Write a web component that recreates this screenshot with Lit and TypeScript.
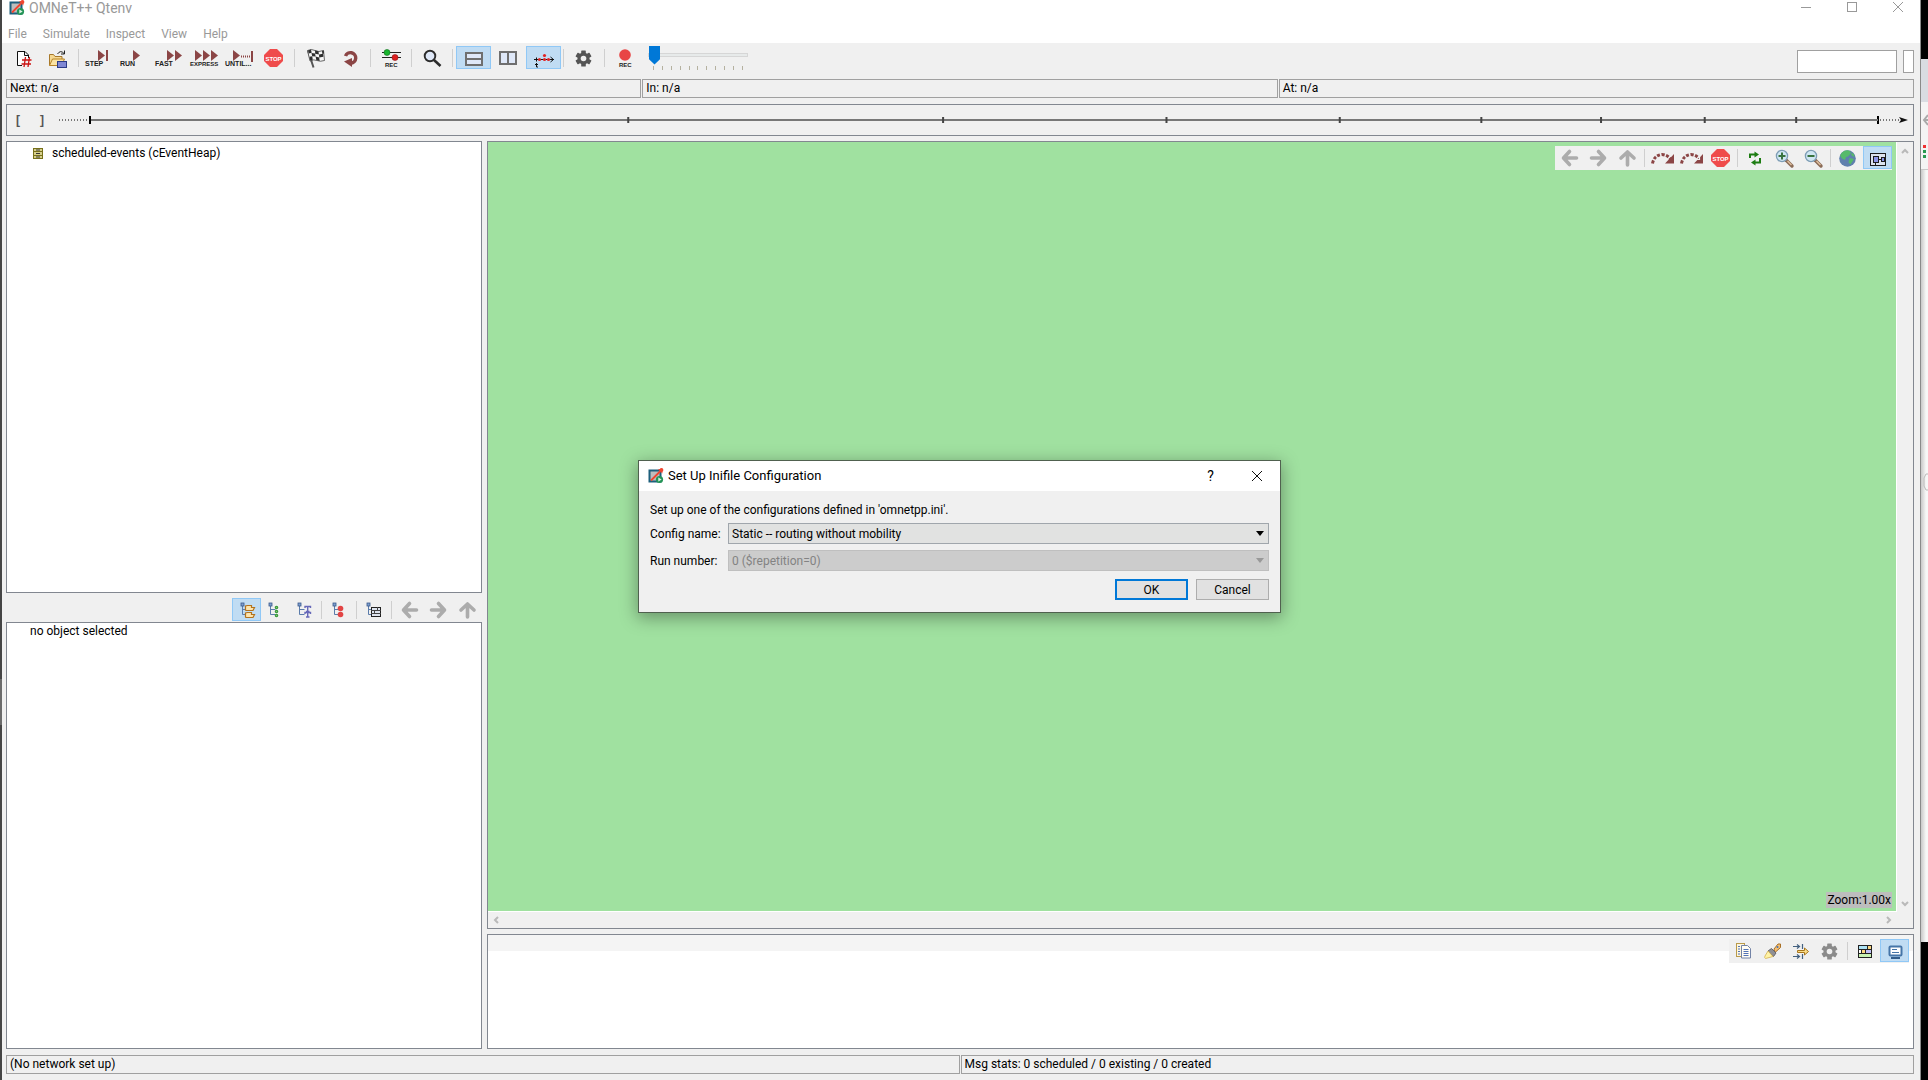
import { LitElement, html, svg, css, nothing } from "lit";
import type { SVGTemplateResult } from "lit";
import { customElement, property } from "lit/decorators.js";
import { classMap } from "lit/directives/class-map.js";

const MAROON = "#8b4545";

const triangle = (x: number, y = 4) => svg`<path d="M${x} ${y}l7 5.5l-7 5.5z" fill="${MAROON}"/>`;
const label = (x: number, text: string, size = 7) =>
  svg`<text x="${x}" y="20" font-size="${size}" font-weight="bold" fill="#222">${text}</text>`;
const stopSign = (x: number, y: number) => svg`
  <path d="M${x + 6} ${y}h7l6 6v6l-6 6h-7l-6-6v-6z" fill="#ef4b4b"/>
  <text x="${x + 9.5}" y="${y + 11.5}" font-size="6" font-weight="bold" fill="#fff" text-anchor="middle">STOP</text>`;
const gear = (cx: number, cy: number, fill: string) => svg`
  <g transform="translate(${cx} ${cy})" fill="${fill}">
    ${[0, 60, 120].map((a) => svg`<rect x="-2.3" y="-8" width="4.6" height="16" rx=".6" transform="rotate(${a})"/>`)}
    <circle r="6"/><circle r="2.8" fill="#efefef"/>
  </g>`;
const arrow = (angle: number) => svg`
  <path transform="translate(14.5 12) rotate(${angle})" d="M7 0H-5M0-6.500L-6 0L0 6.500" fill="none"
    stroke="#acacac" stroke-width="3.600" stroke-linecap="round" stroke-linejoin="round"/>`;
const treeStem = (x: number) => svg`
  <path d="M${x + 1.5} 7v9.500h5M${x + 1.5} 11.500h5" fill="none" stroke="#5b7cab"/>
  <rect x="${x}" y="5" width="3" height="3" fill="#7fa0cf" stroke="#39588c" stroke-width=".8"/>`;
const hop = (fast: boolean) => svg`
  <path d="M4.500 17.500Q6 9.500 14 8.500Q20 9 23 14" fill="none" stroke="${MAROON}" stroke-width="3" stroke-dasharray="3 1.500"/>
  <path d="M26 8v9.500h-9z" fill="${MAROON}"/>
  ${fast ? svg`<path d="M22.500 8v6M18.500 13.500h4" stroke="#efefef" stroke-width="1.200"/>` : nothing}`;
const lens = (plus: boolean) => svg`
  <path d="M16 14l6 6" stroke="#8a6a55" stroke-width="3.400" stroke-linecap="round"/>
  <path d="M17.500 15l4 4" stroke="#e3c3a2" stroke-width="1.200"/>
  <circle cx="12" cy="10" r="5.600" fill="#cfe6f3" stroke="#7d9db5" stroke-width="1.300"/>
  <path d="${plus ? "M8.500 10h7M12 6.500v7" : "M8.500 10h7"}" stroke="#39733f" stroke-width="2"/>`;

const ICONS: Record<string, SVGTemplateResult> = {
  app: svg`
    <rect x="1.500" y="2.500" width="11" height="11" fill="#bdbdbd" stroke="#1d5f7c" stroke-width="2"/>
    <path d="M3 12.500L12 3.500" stroke="#f0452f" stroke-width="1.800"/>
    <path d="M10 1.500L14 .5L14.500 5.500Z" fill="#f0452f"/><circle cx="13.500" cy="2" r="1.900" fill="#f0452f"/>
    <circle cx="11.500" cy="11.500" r="3.600" fill="#249457"/><path d="M10.300 9.500l3.400 2l-3.400 2z" fill="#dff3e6"/>`,
  newNet: svg`
    <path d="M12 6h7v3.500h3v3h-6v6.500h-4z" fill="#fff"/>
    <path d="M16 19.500h-4.500v-14h7.500l3.500 3.500v3M18.500 5.500v4h4" fill="none" stroke="#111"/>
    <path d="M19.500 11l-1.500 10M23.500 11l-1.500 10M16 14h9.500M15.500 18h9.500" stroke="#cc1414" stroke-width="1.300"/>`,
  open: svg`
    <path d="M8.500 19.500v-11h4l1.500 2h7v3" fill="#f6d992" stroke="#a8792b"/>
    <path d="M8.500 19.500l3-6.500h12l-3 6.500z" fill="#fbe3a2" stroke="#b98427"/>
    <path d="M16.500 8q3-4.500 6.500-.5M23.500 4.500v3.500h-3.500" fill="none" stroke="#222"/>
    <rect x="16.500" y="15.500" width="9" height="6" fill="#8087d3" stroke="#2c3a86"/>`,
  step: svg`${triangle(16)}<path d="M25 4v11" stroke="${MAROON}" stroke-width="2"/>${label(3, "STEP")}`,
  run: svg`${triangle(16)}${label(3, "RUN")}`,
  fast: svg`${triangle(15)}${triangle(23)}${label(3, "FAST")}`,
  express: svg`${triangle(8)}${triangle(16)}${triangle(24)}${label(3, "EXPRESS", 6)}`,
  until: svg`${triangle(11)}<path d="M19 10.500h9" stroke="${MAROON}" stroke-dasharray="1 1" stroke-width="2"/>
    <path d="M30 5v11" stroke="${MAROON}" stroke-width="2"/>${label(3, "UNTIL...")}`,
  stop: stopSign(7, 3),
  flag: svg`
    <path d="M10 4.500L15.500 21.500" stroke="#555" stroke-width="2"/>
    <path d="M9.500 4.500q4-2 7.500 0t8.500 0l1 10q-4.500 1.500-7.500 0t-7 .5z" fill="#f5f5f5" stroke="#444" stroke-width=".8"/>
    <g fill="#2e2e2e"><path d="M10 4.500l3-1l.7 3.300l-3 .8zM17 4.500l3.500.8l.4 3.200l-3.700-.8zM13.500 7l3.600.5l.5 3l-3.400-.2zM21 8.400l4-.6l.4 3l-4.200.6z
      M11.500 10.800l2.700-.5l.6 3.500l-2.600.8zM17.600 10.500l3.600.9l.4 3.500l-3.300-.8zM24 4.900l1.700-.4l.3 3l-1.700.3z"/></g>`,
  rebuild: svg`
    <path d="M12.500 10a5.300 5.300 0 1 1 5.500 7.200" fill="none" stroke="${MAROON}" stroke-width="3.400"/>
    <path d="M11 15.500l8-3.500v9z" fill="${MAROON}"/>`,
  record: svg`
    <path d="M8 6.500h19M8 11.500h19" stroke="#222"/>
    <circle cx="13" cy="6.500" r="3" fill="#19b52f" stroke="#0c6b1a" stroke-width=".6"/>
    <circle cx="21" cy="11.500" r="3" fill="#dd2020" stroke="#8c1010" stroke-width=".6"/>
    <text x="11" y="21" font-size="6" font-weight="bold" fill="#222">REC</text>`,
  find: svg`
    <circle cx="15" cy="10" r="5.300" fill="#dfe8f8" stroke="#2c2c2c" stroke-width="1.900"/>
    <path d="M19 14l6.500 6" stroke="#2c2c2c" stroke-width="2.600"/>`,
  splitH: svg`<g fill="#dfe8f8" stroke="#6f6f6f" stroke-width="2"><rect x="10" y="7" width="16" height="12"/><path d="M10 13h16"/></g>`,
  splitV: svg`<g fill="#dfe8f8" stroke="#6f6f6f" stroke-width="2"><rect x="9" y="6" width="16" height="12"/><path d="M17 6v12"/></g>`,
  timeline: svg`
    <path d="M8 13.500h20M10.500 11.500v4M24.500 11l3 2.500l-3 2.500" stroke="#111" fill="none"/>
    <g fill="#e02323"><circle cx="13.500" cy="13.500" r="1.600"/><circle cx="18.500" cy="13.500" r="1.600"/><circle cx="22.500" cy="13.500" r="1.600"/><circle cx="18.500" cy="9.500" r="1.600"/></g>
    <path d="M10.500 17v4h1.500M9 18.500h3" stroke="#111" fill="none"/>`,
  prefs: gear(16.5, 12.5, "#555"),
  recVideo: svg`<circle cx="17" cy="9" r="5.800" fill="#e84545"/>
    <text x="11" y="21" font-size="6" font-weight="bold" fill="#222">REC</text>`,

  back: arrow(0),
  forward: arrow(180),
  up: arrow(90),
  runUntil: hop(false),
  fastUntil: hop(true),
  stopSmall: stopSign(5, 3),
  refresh: svg`
    <path d="M9 12v-3.500h5M19 12v4.500h-5" fill="none" stroke="#1d7d12" stroke-width="2"/>
    <path d="M13.500 5.500l4.500 3l-4.500 3zM14.500 13.500l-4.500 3l4.500 3z" fill="#1d7d12"/>`,
  zoomIn: lens(true),
  zoomOut: lens(false),
  globe: svg`
    <circle cx="13.500" cy="12.500" r="8.300" fill="#5f80ad"/>
    <path d="M8 6.500q4-3.500 8-1.500l1 2l-3 3.500l-2 .5l-1 3l-3-1.500l-2-3zM15.500 12l4.500 1l-3.500 5.500l-2-2zM18 6.500l2.500 2.500l-.5 2l-3-2z" fill="#56ba6a"/>`,
  layout: svg`
    <rect x="7.500" y="7.500" width="15" height="12" fill="#dce3ee" stroke="#1c1c1c"/>
    <rect x="10.500" y="10.500" width="5" height="6" fill="#8d95e8" stroke="#1c1c1c"/>
    <rect x="18.500" y="11.500" width="3" height="4" fill="#8d95e8" stroke="#1c1c1c"/><path d="M15.500 13.500h3M12.500 17v2" stroke="#1c1c1c"/>`,

  modeFolders: svg`${treeStem(9)}
    <g fill="#fde4ad" stroke="#b4721c" stroke-width="1.200"><path d="M13.500 12v-4l2-.5h4v2h3l-1.500 3h-7zM13.500 19v-4l2-.5h4v2h3l-1.500 3h-7z"/></g>`,
  modeChildren: svg`${treeStem(8)}
    <g fill="#8fce7f" stroke="#3b9a3d" stroke-width="1.200"><circle cx="15.500" cy="9.500" r="1.200"/><circle cx="15.500" cy="13.500" r="1.200"/><circle cx="15.500" cy="17.500" r="1.200"/></g>`,
  modeTypes: svg`${treeStem(8)}
    <path d="M15 10v-1.500h5.500v1.500M17.700 8.500v5M16 13.500h3.500M15 16v-1.500h5.500v1.500M17.700 14.500v4.500M16 19h3.500" fill="none" stroke="#6668b8" stroke-width="1.400"/>`,
  modeInherit: svg`${treeStem(8)}<circle cx="15.500" cy="10.500" r="2.800" fill="#e24444"/><circle cx="15.500" cy="16.500" r="2.800" fill="#e24444"/>`,
  modeFlat: svg`${treeStem(7)}
    <rect x="11.500" y="9.500" width="9" height="9" fill="#dfe5ef" stroke="#222"/><path d="M11 12.500h10M11 15.500h10M14.500 12v3.500M17.500 9v3.500" stroke="#444"/>`,

  copy: svg`
    <rect x="7.500" y="4.500" width="8" height="13" fill="#fdf6df" stroke="#b99a4b"/>
    <path d="M12.500 6.500h6l3 3v9.500h-9z" fill="#fffdf4" stroke="#7383a6"/>
    <path d="M9 7.500h2M9 10h2M9 12.500h2M9 15h2M14.500 10.500h5M14.500 12.500h5M14.500 14.500h5M14.500 16.500h5" stroke="#5273b5"/>`,
  highlight: svg`
    <path d="M16 10l4-5h2.500v3.500l-5.500 5z" fill="#f6bf71" stroke="#a86f25"/>
    <path d="M10 12l3.500-2.500l4.500 4.500l-2.500 3.500z" fill="#8f8f94" stroke="#66666c"/>
    <path d="M10 12l5 5.500l-7.500 2q-1.500-1-.5-2.500z" fill="#fff3a6" stroke="#d3b051" stroke-width=".8"/><circle cx="19.500" cy="8" r="1" fill="#4472b5"/>`,
  filter: svg`
    <path d="M6 7.500h6M6 17.500h6M10 5.500l2.500 2l-2.500 2M10 15.500l2.500 2l-2.500 2M15.500 5v5M15.500 15v5" fill="none" stroke="#43607f" stroke-width="1.200"/>
    <path d="M10.500 11.500h7v-2.500l4 3.500l-4 3.500v-2.500h-7z" fill="#fbdc85" stroke="#a8761d"/>`,
  logPrefs: gear(13.5, 12.5, "#8b8b8b"),
  logMode: svg`
    <rect x="7.500" y="6.500" width="13" height="12" fill="#fff" stroke="#222"/>
    <rect x="8" y="7" width="8" height="3" fill="#aee3f5"/><rect x="17" y="7" width="3" height="3" fill="#fbd783"/>
    <rect x="11" y="11" width="3" height="3" fill="#fbd783"/><rect x="15" y="11" width="5" height="3" fill="#c3c1f7"/><rect x="8" y="15" width="12" height="3" fill="#c9f3b3"/>
    <path d="M7 10.500h14M7 14.500h14M16.500 7v3M10.500 11v3M14.500 11v3" stroke="#222"/>`,
  console: svg`
    <rect x="9.500" y="7.500" width="12" height="9" rx="1" fill="#fff" stroke="#4575a8" stroke-width="2"/>
    <path d="M12 10.500h5M12 13.500h7" stroke="#4575a8"/><path d="M11 19h9" stroke="#345d8a" stroke-width="2"/>`,
};

interface Tool {
  icon: string;
  title: string;
  active?: boolean;
}

const SEP = "sep" as const;
type Item = Tool | typeof SEP;

const MAIN_TOOLS: Item[] = [
  { icon: "newNet", title: "Set Up a Network" },
  { icon: "open", title: "Set Up a Configuration" },
  SEP,
  { icon: "step", title: "Step" },
  { icon: "run", title: "Run" },
  { icon: "fast", title: "Fast Run" },
  { icon: "express", title: "Express Run" },
  { icon: "until", title: "Run Until" },
  { icon: "stop", title: "Stop" },
  SEP,
  { icon: "flag", title: "Conclude Simulation" },
  { icon: "rebuild", title: "Rebuild Network" },
  SEP,
  { icon: "record", title: "Eventlog Recording" },
  SEP,
  { icon: "find", title: "Find Objects" },
  SEP,
  { icon: "splitH", title: "Horizontal Layout", active: true },
  { icon: "splitV", title: "Vertical Layout" },
  { icon: "timeline", title: "Show Timeline", active: true },
  SEP,
  { icon: "prefs", title: "Preferences" },
  SEP,
  { icon: "recVideo", title: "Record Video" },
];

const VIEW_TOOLS: Item[] = [
  { icon: "back", title: "Back" },
  { icon: "forward", title: "Forward" },
  { icon: "up", title: "Go to Parent" },
  SEP,
  { icon: "runUntil", title: "Run Until Next Event in Module" },
  { icon: "fastUntil", title: "Fast Run Until Next Event" },
  { icon: "stopSmall", title: "Stop" },
  SEP,
  { icon: "refresh", title: "Re-layout" },
  { icon: "zoomIn", title: "Zoom In" },
  { icon: "zoomOut", title: "Zoom Out" },
  SEP,
  { icon: "globe", title: "3D View" },
  { icon: "layout", title: "2D View", active: true },
];

const TREE_TOOLS: Item[] = [
  { icon: "modeFolders", title: "Grouped", active: true },
  { icon: "modeChildren", title: "Children" },
  { icon: "modeTypes", title: "Types" },
  SEP,
  { icon: "modeInherit", title: "Inheritance" },
  SEP,
  { icon: "modeFlat", title: "Flat" },
  SEP,
  { icon: "back", title: "Back" },
  { icon: "forward", title: "Forward" },
  { icon: "up", title: "Go to Parent" },
];

const LOG_TOOLS: Item[] = [
  { icon: "copy", title: "Copy" },
  { icon: "highlight", title: "Find" },
  { icon: "filter", title: "Filter" },
  { icon: "logPrefs", title: "Configure" },
  SEP,
  { icon: "logMode", title: "Message Log" },
  { icon: "console", title: "Console", active: true },
];

@customElement("qt-toolbar")
export class QtToolbar extends LitElement {
  @property({ attribute: false }) items: Item[] = [];
  @property({ type: Number }) cell = 29;

  static styles = css`
    :host { display: flex; align-items: flex-start; }
    .tool {
      flex: none;
      display: block;
      margin: 0;
      padding: 0;
      height: 23px;
      border: 0;
      background: none;
    }
    .active { background: #c0dcf3; box-shadow: inset 0 0 0 1px #90c8f6; }
    .sep { flex: none; width: 1px; height: 18px; margin: 3px 3px 0 2px; background: #cfcfcf; }
    svg { display: block; font-family: "Liberation Sans", Arial, sans-serif; }
  `;

  render() {
    return this.items.map((item) =>
      item === SEP
        ? html`<span class="sep"></span>`
        : html`<button class=${classMap({ tool: true, active: !!item.active })} aria-label=${item.title}>
            <svg width=${this.cell} height="23" viewBox="0 0 ${this.cell} 23">${ICONS[item.icon]}</svg>
          </button>`
    );
  }
}

@customElement("sim-timeline")
export class SimTimeline extends LitElement {
  static styles = css`
    :host {
      display: flex;
      align-items: center;
      height: 30px;
      padding: 0 5px 0 9px;
      border: 1px solid #828790;
    }
    .bracket { width: 24px; font: bold 12px "Liberation Sans", Arial, sans-serif; color: #555; }
    .dots { height: 2px; background: repeating-linear-gradient(90deg, #777 0 1px, transparent 1px 3px); }
    .lead { width: 30px; margin-left: -5px; }
    .trail { width: 22px; }
    .axis { flex: 1; height: 10px; overflow: visible; }
    .head { width: 9px; height: 6px; }
  `;

  render() {
    const ticks = [1, 2, 3, 4, 5, 6, 7, 8, 9, 10];
    return html`
      <span class="bracket">[</span><span class="bracket">]</span>
      <span class="dots lead"></span>
      <svg class="axis">
        <rect x="0" y="4" width="100%" height="2" fill="#777" />
        ${ticks.map((n) => {
          const major = n === 1 || n === 10;
          return svg`<rect x="${Math.log10(n) * 100}%" y="${major ? 1 : 2}" width="2"
            height="${major ? 8 : 6}" fill="${major ? "#000" : "#444"}"/>`;
        })}
      </svg>
      <span class="dots trail"></span>
      <svg class="head" viewBox="0 0 9 6"><path d="M0 0L9 3L0 6L2 3z" fill="#111" /></svg>
    `;
  }
}

@customElement("config-dialog")
export class ConfigDialog extends LitElement {
  static styles = css`
    :host {
      display: block;
      box-sizing: border-box;
      width: 643px;
      border: 1px solid #50614f;
      background: #f0f0f0;
      box-shadow: 0 4px 16px 1px rgba(0, 0, 0, 0.34);
    }
    .title {
      display: flex;
      align-items: center;
      gap: 4px;
      height: 30px;
      padding: 0 17px 0 9px;
      background: #fff;
    }
    .name { flex: 1; font-size: 13px; }
    .win { padding: 0; border: 0; background: none; font: inherit; color: #000; }
    .help { width: 11px; margin-right: 31px; font-size: 14px; }
    svg { display: block; }
    .body { padding: 10px 11px 12px 11px; }
    .intro { margin: 0 0 4px; line-height: 18px; }
    .form { display: grid; grid-template-columns: 73px 1fr; gap: 6px 5px; align-items: center; white-space: nowrap; }
    .combo { display: grid; align-items: center; }
    .combo > * { grid-area: 1 / 1; }
    .combo svg { justify-self: end; margin-right: 5px; pointer-events: none; }
    select {
      appearance: none;
      width: 100%;
      height: 21px;
      padding: 0 3px;
      border: 1px solid #a0a6ac;
      border-radius: 0;
      background: #e1e2e1;
      color: #000;
      font: inherit;
    }
    select:disabled { border-color: #bfbfbf; background: #cccccc; color: #838383; opacity: 1; }
    .actions { display: flex; justify-content: flex-end; gap: 8px; margin-top: 8px; }
    .btn {
      width: 73px;
      height: 21px;
      padding: 0;
      border: 1px solid #adadad;
      background: #e1e1e1;
      color: #000;
      font: inherit;
    }
    .ok { border: 2px solid #0078d7; }
  `;

  private arrow(fill: string) {
    return html`<svg width="8" height="5" viewBox="0 0 8 5"><path d="M0 0h8l-4 5z" fill=${fill} /></svg>`;
  }

  render() {
    return html`
      <div class="title">
        <svg width="16" height="16" viewBox="0 0 16 16">${ICONS.app}</svg>
        <span class="name">Set Up Inifile Configuration</span>
        <button class="win help">?</button>
        <button class="win" aria-label="Close">
          <svg width="12" height="12" viewBox="0 0 12 12"><path d="M1 1l10 10M11 1L1 11" stroke="#111" /></svg>
        </button>
      </div>
      <div class="body">
        <p class="intro">Set up one of the configurations defined in 'omnetpp.ini'.</p>
        <div class="form">
          <label for="config">Config name:</label>
          <div class="combo">
            <select id="config"><option>Static -- routing without mobility</option></select>
            ${this.arrow("#000")}
          </div>
          <label for="run">Run number:</label>
          <div class="combo">
            <select id="run" disabled><option>0 ($repetition=0)</option></select>
            ${this.arrow("#999")}
          </div>
        </div>
        <div class="actions">
          <button class="btn ok">OK</button>
          <button class="btn">Cancel</button>
        </div>
      </div>
    `;
  }
}

@customElement("app-root")
export class AppRoot extends LitElement {
  static styles = css`
    :host {
      display: grid;
      grid-template-columns: 2px minmax(0, 1fr) 8px;
      position: relative;
      box-sizing: border-box;
      height: 100vh;
      overflow: hidden;
      font: 12px/16px Roboto, "Open Sans", sans-serif;
      color: #000;
    }
    .edge-left { background: linear-gradient(#454545 0 679px, #6b6b6b 679px 725px, #454545 725px); }
    .edge-right {
      display: grid;
      grid-template-rows: 59px 43px 68px 1fr 138px;
      border-left: 1px solid #8a8a8a;
      overflow: hidden;
    }
    .dark { background: #000; }
    .tab { background: #d9dce2; }
    .nav { border-bottom: 1px solid #c9c9c9; background: #f4f4f4; }
    .sheet { background: linear-gradient(90deg, #c8c8c8, #f7f7f7 5px); }
    .edge-right svg { display: block; }
    .window { display: flex; flex-direction: column; min-width: 0; background: #f0f0f0; }

    .head { background: #fff; color: #999; }
    .title { display: flex; align-items: center; gap: 4px; height: 16px; padding: 0 16px 0 7px; }
    .name { flex: 1; font-size: 14px; }
    .caption { display: flex; gap: 34px; }
    .caption button, .scroll button { display: block; padding: 0; border: 0; background: none; }
    .caption svg, .title > svg { display: block; }
    .menu { display: flex; gap: 16px; padding: 10px 6px 1px; }
    .menu a { color: inherit; text-decoration: none; }

    .tools { display: flex; align-items: flex-start; height: 33px; padding: 3px 6px 0 4px; }
    .speed { display: grid; width: 100px; margin: -1px 0 0 5px; }
    .speed input { appearance: none; width: 100%; height: 19px; margin: 0; background: none; }
    .speed input::-webkit-slider-runnable-track {
      height: 4px;
      border: 1px solid #d6d6d6;
      box-sizing: border-box;
      background: #e7eaea;
    }
    .speed input::-webkit-slider-thumb {
      appearance: none;
      width: 11px;
      height: 19px;
      margin-top: -8px;
      background: #0078d7;
      clip-path: polygon(0 0, 100% 0, 100% 72%, 50% 100%, 0 72%);
    }
    .marks { display: flex; justify-content: space-between; width: 90px; height: 4px; padding: 2px 0 0 5px; }
    .marks i { width: 1px; background: #b5b1a0; }
    .fields { display: flex; gap: 6px; margin: 4px 0 0 auto; }
    .fields input { box-sizing: border-box; height: 23px; padding: 0 3px; border: 1px solid #a0a0a0; background: #fff; font: inherit; }
    .wide { width: 100px; }
    .slim { width: 11px; }

    .status { display: flex; gap: 1px; padding: 0 6px 0 4px; }
    .status div { flex: 1 1 0; box-sizing: border-box; height: 19px; padding: 0 3px; border: 1px solid #a0a0a0; line-height: 17px; }
    sim-timeline { margin: 6px 6px 0 4px; }

    .work {
      flex: 1;
      min-height: 0;
      display: grid;
      grid-template-columns: minmax(0, 476fr) minmax(0, 1427fr);
      gap: 5px;
      padding: 5px 6px 6px 4px;
    }
    .left { display: grid; grid-template-rows: 452fr 29px 427fr; min-height: 0; }
    .right { display: grid; grid-template-rows: 788fr 115fr; gap: 5px; min-height: 0; }
    .panel { box-sizing: border-box; border: 1px solid #828790; background: #fff; }
    .row { display: flex; align-items: center; gap: 9px; padding: 3px 0 0 26px; }
    .row svg { display: block; }
    .empty { padding: 0 23px; }
    .treebar { justify-content: flex-end; padding-top: 5px; }

    .canvas { display: grid; grid-template: minmax(0, 1fr) 16px / minmax(0, 1fr) 16px; background: #f0f0f0; }
    .scene {
      display: flex;
      flex-direction: column;
      justify-content: space-between;
      align-items: flex-end;
      padding: 4px 4px 3px;
      border: solid #fff;
      border-width: 0 1px 1px 0;
      background: #a0e1a0;
    }
    .floating { background: #f0f0f0; height: 24px; }
    .zoom { padding: 0 1px; background: #bdbdbd; }
    .scroll { display: flex; justify-content: space-between; align-items: center; }
    .vert { flex-direction: column; padding: 5px 1px 4px 0; }
    .horz { padding: 0 4px 0 4px; }
    .scroll svg { display: block; }
    .log { display: flex; justify-content: flex-end; align-items: flex-start; padding: 4px 4px 0; background: linear-gradient(#f4f4f4 0 16px, #fff 16px); }
    .bottom { padding-bottom: 6px; }

    config-dialog { position: absolute; left: calc(50% - 326px); top: calc(50% - 80px); }
  `;

  private chevron(path: string) {
    return html`<svg width="8" height="8" viewBox="0 0 8 8"><path d=${path} fill="none" stroke="#b9b9b9" stroke-width="2" /></svg>`;
  }

  render() {
    return html`
      <div class="edge-left"></div>
      <div class="window">
        <header class="head">
          <div class="title">
            <svg width="16" height="16" viewBox="0 0 16 16">${ICONS.app}</svg>
            <span class="name">OMNeT++ Qtenv</span>
            <div class="caption">
              <button aria-label="Minimize"><svg width="12" height="12" viewBox="0 0 12 12"><path d="M1 5.500h10" stroke="#999" /></svg></button>
              <button aria-label="Maximize"><svg width="12" height="12" viewBox="0 0 12 12"><rect x="1.500" y=".5" width="9" height="9" fill="none" stroke="#999" /></svg></button>
              <button aria-label="Close"><svg width="12" height="12" viewBox="0 0 12 12"><path d="M1 0l10 10M11 0L1 10" stroke="#999" /></svg></button>
            </div>
          </div>
          <nav class="menu">
            ${["File", "Simulate", "Inspect", "View", "Help"].map((m) => html`<a href="#">${m}</a>`)}
          </nav>
        </header>

        <div class="tools">
          <qt-toolbar .items=${MAIN_TOOLS} .cell=${35}></qt-toolbar>
          <div class="speed">
            <input type="range" min="0" max="10" value="0" aria-label="Animation speed" />
            <div class="marks">${Array.from({ length: 11 }, () => html`<i></i>`)}</div>
          </div>
          <div class="fields">
            <input class="wide" type="text" aria-label="Simulation time" />
            <input class="slim" type="text" aria-label="Event number" />
          </div>
        </div>

        <div class="status"><div>Next: n/a</div><div>In: n/a</div><div>At: n/a</div></div>
        <sim-timeline></sim-timeline>

        <main class="work">
          <section class="left">
            <div class="panel">
              <div class="row">
                <svg width="10" height="11" viewBox="0 0 10 11">
                  <rect x=".5" y=".5" width="9" height="10" fill="#d6cf8c" stroke="#77701a" />
                  <path d="M1 3.500h8M1 7.500h8" stroke="#77701a" /><path d="M3 2h4M3 5.500h4M3 9h4" stroke="#333" />
                </svg>
                <span>scheduled-events (cEventHeap)</span>
              </div>
            </div>
            <qt-toolbar class="treebar" .items=${TREE_TOOLS}></qt-toolbar>
            <div class="panel empty">no object selected</div>
          </section>

          <section class="right">
            <div class="panel canvas">
              <div class="scene">
                <qt-toolbar class="floating" .items=${VIEW_TOOLS}></qt-toolbar>
                <span class="zoom">Zoom:1.00x</span>
              </div>
              <div class="scroll vert">
                <button aria-label="Scroll up">${this.chevron("M1 6l3-3l3 3")}</button>
                <button aria-label="Scroll down">${this.chevron("M1 2l3 3l3-3")}</button>
              </div>
              <div class="scroll horz">
                <button aria-label="Scroll left">${this.chevron("M6 1l-3 3l3 3")}</button>
                <button aria-label="Scroll right">${this.chevron("M2 1l3 3l-3 3")}</button>
              </div>
            </div>
            <div class="panel log">
              <qt-toolbar class="floating" .items=${LOG_TOOLS}></qt-toolbar>
            </div>
          </section>
        </main>

        <footer class="status bottom">
          <div>(No network set up)</div>
          <div>Msg stats: 0 scheduled / 0 existing / 0 created</div>
        </footer>
      </div>
      <div class="edge-right">
        <div class="dark"></div>
        <div class="tab"></div>
        <div class="nav">
          <svg width="7" height="60" viewBox="0 0 7 60">
            <path d="M7 13l-4 5l4 5M3 18h4" fill="none" stroke="#aaa" stroke-width="2" />
            <rect x="2" y="43" width="3" height="3" fill="#e33" /><path d="M2 49.500h3M2 54.500h3" stroke="#2a9950" stroke-width="3" />
          </svg>
        </div>
        <div class="sheet">
          <svg width="7" height="324" viewBox="0 0 7 324"><path d="M7 304h-2l-2 4v8l2 4h2" fill="none" stroke="#bbb" stroke-width="1" /></svg>
        </div>
        <div class="dark"></div>
      </div>
      <config-dialog></config-dialog>
    `;
  }
}
